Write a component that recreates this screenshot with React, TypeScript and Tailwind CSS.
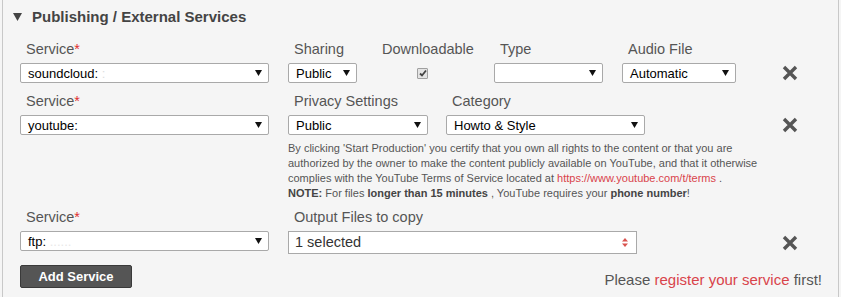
import React from "react";

function Arrow() {
  return (
    <svg width="7" height="6" viewBox="0 0 7 6" className="shrink-0">
      <polygon points="0,0 7,0 3.5,6" fill="#111" />
    </svg>
  );
}

function Select({ w, children }: { w: string; children?: React.ReactNode }) {
  return (
    <div
      className={`${w} h-[20px] bg-white border border-[#a9a9a9] rounded-[2px] flex items-center justify-between pl-[7px] pr-[6px] text-[13px] text-black leading-none`}
    >
      <span className="whitespace-pre">{children}</span>
      <Arrow />
    </div>
  );
}

function Label({ children, req }: { children: React.ReactNode; req?: boolean }) {
  return (
    <div className="h-[18px] leading-[18px] pl-[6px] text-[14.5px] text-[#555] whitespace-nowrap">
      {children}
      {req && <span className="text-[#e03030]">*</span>}
    </div>
  );
}

function XIcon() {
  return (
    <svg width="16" height="16" viewBox="0 0 16 16">
      <path d="M2 2 L14 14 M14 2 L2 14" stroke="#555" strokeWidth="3.4" strokeLinecap="butt" />
    </svg>
  );
}

function XCol({ h = "h-[20px]" }: { h?: string }) {
  return (
    <div className="ml-auto mr-[40px] flex flex-col">
      <div className="h-[18px]" />
      <div className={`mt-[5px] ${h} flex items-center`}>
        <XIcon />
      </div>
    </div>
  );
}

export default function App() {
  return (
    <div className="min-h-screen bg-[#f5f5f5] font-['Liberation_Sans',Arial,sans-serif]">
      <div className="ml-[2px] w-[837px] h-[297px] border-x border-[#c8c8c8] pt-[8px]">
        {/* Title */}
        <div className="flex items-center h-[18px] pl-[10px]">
          <svg width="9" height="8" viewBox="0 0 9 8">
            <polygon points="0,0 9,0 4.5,8" fill="#444" />
          </svg>
          <span className="ml-[10px] text-[15px] font-bold text-[#444]">Publishing / External Services</span>
        </div>

        {/* Row 1 */}
        <div className="flex pl-[17px] mt-[14px]">
          <div className="flex flex-col w-[249px]">
            <Label req>Service</Label>
            <div className="mt-[5px]">
              <Select w="w-[249px]">
                soundcloud: <span className="text-[#ddd]">:</span>
              </Select>
            </div>
          </div>
          <div className="flex flex-col ml-[19px] w-[69px]">
            <Label>Sharing</Label>
            <div className="mt-[5px]">
              <Select w="w-[69px]">Public</Select>
            </div>
          </div>
          <div className="flex flex-col ml-[19px] w-[99px]">
            <Label>Downloadable</Label>
            <div className="mt-[5px] h-[20px] flex items-center pl-[41px]">
              <div className="w-[11px] h-[11px] border border-[#a0a0a0] bg-[#e4e4e4] rounded-[1px] flex items-center justify-center">
                <svg width="8" height="8" viewBox="0 0 8 8">
                  <path d="M1 4.5 L3 6.5 L7 1.5" stroke="#444" strokeWidth="1.8" fill="none" />
                </svg>
              </div>
            </div>
          </div>
          <div className="flex flex-col ml-[19px] w-[109px]">
            <Label>Type</Label>
            <div className="mt-[5px]">
              <Select w="w-[109px]"></Select>
            </div>
          </div>
          <div className="flex flex-col ml-[19px] w-[114px]">
            <Label>Audio File</Label>
            <div className="mt-[5px]">
              <Select w="w-[114px]">Automatic</Select>
            </div>
          </div>
          <XCol />
        </div>

        {/* Row 2 */}
        <div className="flex pl-[17px] mt-[9px]">
          <div className="flex flex-col w-[249px]">
            <Label req>Service</Label>
            <div className="mt-[5px]">
              <Select w="w-[249px]">youtube:</Select>
            </div>
          </div>
          <div className="flex flex-col flex-1 ml-[19px]">
            <div className="flex">
              <div className="flex flex-col w-[140px]">
                <Label>Privacy Settings</Label>
                <div className="mt-[5px]">
                  <Select w="w-[140px]">Public</Select>
                </div>
              </div>
              <div className="flex flex-col ml-[18px] w-[199px]">
                <Label>Category</Label>
                <div className="mt-[5px]">
                  <Select w="w-[199px]">Howto &amp; Style</Select>
                </div>
              </div>
              <XCol />
            </div>
            <div className="mt-[6px] text-[11px] leading-[15px] text-[#555] whitespace-nowrap">
              By clicking 'Start Production' you certify that you own all rights to the content or that you are
              <br />
              authorized by the owner to make the content publicly available on YouTube, and that it otherwise
              <br />
              complies with the YouTube Terms of Service located at{"  "}
              <span className="text-[#d9434b]">https://www.youtube.com/t/terms</span> .
              <br />
              <b className="text-[#444]">NOTE:</b> For files <b className="text-[#444]">longer than 15 minutes</b> , YouTube requires your{" "}
              <b className="text-[#444]">phone number</b>!
            </div>
          </div>
        </div>

        {/* Row 3 */}
        <div className="flex pl-[17px] mt-[7px]">
          <div className="flex flex-col w-[249px]">
            <Label req>Service</Label>
            <div className="mt-[5px]">
              <Select w="w-[249px]">
                ftp: <span className="text-[#e8e8e8]">......</span>
              </Select>
            </div>
          </div>
          <div className="flex flex-col ml-[19px] w-[349px]">
            <Label>Output Files to copy</Label>
            <div className="mt-[5px] w-[349px] h-[23px] bg-white border border-[#a9a9a9] flex items-center justify-between pl-[6px] pr-[8px]">
              <span className="text-[14.5px] text-[#333]">1 selected</span>
              <svg width="6" height="9" viewBox="0 0 6 9">
                <polygon points="0,3.5 6,3.5 3,0" fill="#d9534f" />
                <polygon points="0,5.5 6,5.5 3,9" fill="#d9534f" />
              </svg>
            </div>
          </div>
          <XCol h="h-[23px]" />
        </div>

        {/* Bottom */}
        <div className="flex items-end pl-[17px] mt-[11px] pr-[16px]">
          <button className="w-[112px] h-[23px] bg-[#555] border border-[#3a3a3a] rounded-[2px] text-white text-[13px] font-bold leading-none">
            Add Service
          </button>
          <div className="ml-auto text-[15px] leading-[18px] text-[#555] mb-[-1px]">
            Please <span className="text-[#d9434b]">register your service</span> first!
          </div>
        </div>
      </div>
    </div>
  );
}
